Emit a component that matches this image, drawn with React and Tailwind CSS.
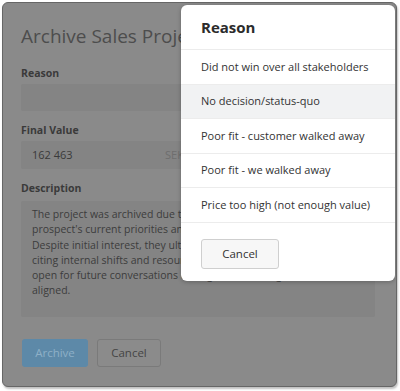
const reasons = [
  "Did not win over all stakeholders",
  "No decision/status-quo",
  "Poor fit - customer walked away",
  "Poor fit - we walked away",
  "Price too high (not enough value)",
];

function ReasonPopover() {
  return (
    <div className="absolute left-[178px] top-[2px] w-[214px] rounded-[6px] bg-white pb-[12px] shadow-[0_1px_4px_rgba(0,0,0,0.25)]">
      <div className="flex h-[44px] items-center px-[20px] text-[15px] font-bold text-[#2b2b2b]">Reason</div>
      <ul className="border-t border-[#ececec]">
        {reasons.map((reason, i) => (
          <li
            key={reason}
            className={`flex h-[34.5px] items-center whitespace-nowrap border-b border-[#ececec] px-[20px] text-[11px] text-[#333] ${
              i === 1 ? "bg-[#f1f2f3]" : ""
            }`}
          >
            {reason}
          </li>
        ))}
      </ul>
      <div className="px-[20px] pt-[16px]">
        <button className="h-[30px] w-[78px] rounded-[3px] border border-[#cfcfcf] bg-[#f7f7f7] text-[11.5px] text-[#333]">
          Cancel
        </button>
      </div>
    </div>
  );
}

export default function App() {
  return (
    <div className="h-[391px] w-[400px] bg-white p-[2px] font-['Open_Sans',sans-serif]">
      <div className="relative h-[385px] w-[395px] overflow-hidden rounded-[6px] border border-[#666] bg-[#8a8a8a] shadow-[1px_2px_2px_rgba(0,0,0,0.25)]">
        <div className="px-[18px] pt-[20px]">
          <h1 className="text-[19px] leading-[26px] text-[#4d4d4d]">Archive Sales Project</h1>

          <div className="mt-[17px] text-[10.5px] font-bold leading-[15px] text-[#3a3a3a]">Reason</div>
          <div className="mt-[3px] h-[27px] w-[354px] rounded-[2px] bg-[#848484]" />

          <div className="mt-[12px] text-[10.5px] font-bold leading-[15px] text-[#3a3a3a]">Final Value</div>
          <div className="mt-[3px] flex h-[28px] w-[354px] items-center rounded-[2px] bg-[#848484] px-[11px] text-[11px]">
            <span className="w-[133px] text-[#3a3a3a]">162 463</span>
            <span className="text-[#6e6e6e]">SEK</span>
          </div>

          <div className="mt-[12px] text-[10.5px] font-bold leading-[15px] text-[#3a3a3a]">Description</div>
          <div className="mt-[5px] h-[116px] w-[354px] rounded-[2px] bg-[#848484] px-[11px] pt-[6px] text-[10.5px] leading-[15.3px] text-[#3c3c3c]">
            The project was archived due to a misalignment with the
            <br />
            prospect's current priorities and budget constraints.
            <br />
            Despite initial interest, they ultimately chose not to proceed,
            <br />
            citing internal shifts and resource limitations. They remain
            <br />
            open for future conversations once goals and budget are
            <br />
            aligned.
          </div>

          <div className="mt-[22px] flex gap-[9px] pl-[1px]">
            <button className="h-[28px] w-[66px] rounded-[3px] bg-[#5d89a8] text-[11.5px] text-[#8eb0c7]">Archive</button>
            <button className="h-[28px] w-[64px] rounded-[3px] border border-[#7a7a7a] bg-[#8b8b8b] text-[11.5px] text-[#454545]">
              Cancel
            </button>
          </div>
        </div>

        <ReasonPopover />
      </div>
    </div>
  );
}
